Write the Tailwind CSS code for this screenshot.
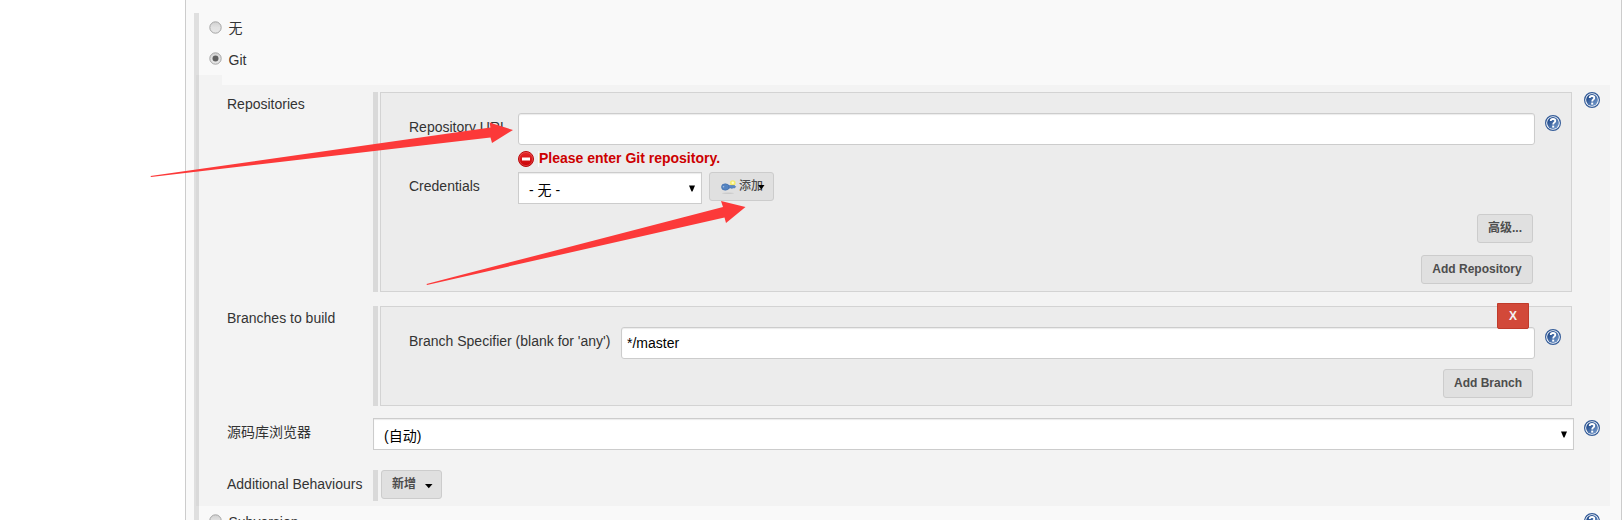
<!DOCTYPE html>
<html lang="zh-CN">
<head>
<meta charset="utf-8">
<title>Git</title>
<script src="https://cdn.jsdelivr.net/npm/@tailwindcss/browser@4"></script>
</head>
<body class="relative h-[520px] w-[1622px] overflow-hidden bg-white pl-[185px] font-['Liberation_Sans','Noto_Sans_CJK_SC',sans-serif] text-[14px] leading-5 text-[#333]">
<svg class="absolute h-0 w-0">
  <defs>
    <linearGradient id="hg" x1="0" y1="0" x2="1" y2="1"><stop offset=".2" stop-color="#234d8d"/><stop offset="1" stop-color="#7fa3d3"/></linearGradient>
    <linearGradient id="rg" x1="0" y1="0" x2="0" y2="1"><stop offset="0" stop-color="#d0d0d0"/><stop offset=".5" stop-color="#e2e2e2"/><stop offset="1" stop-color="#e6e6e6"/></linearGradient>
    <linearGradient id="eg" x1="0" y1="0" x2="0" y2="1"><stop offset="0" stop-color="#e8292c"/><stop offset="1" stop-color="#c80004"/></linearGradient>
  </defs>
  <symbol id="help" viewBox="0 0 16 16">
    <circle cx="8" cy="8" r="7.4" fill="#fff" stroke="#335b98" stroke-width="1.2"/>
    <circle cx="8" cy="8" r="5.9" fill="url(#hg)"/>
    <path d="M5.7 6.1C5.7 4.6 6.7 4 8 4s2.3.7 2.3 1.9C10.300 7.500 8.200 7.400 8.200 9.500" fill="none" stroke="#fff" stroke-width="1.8"/>
    <rect x="7.200" y="10.600" width="2" height="2" fill="#fff"/>
  </symbol>
  <symbol id="radio" viewBox="0 0 13 13">
    <circle cx="6.500" cy="6.500" r="5.700" fill="url(#rg)" stroke="#a5a5a5"/>
  </symbol>
</svg>
<main class="h-[520px] w-[1437px] border-x border-[#ccc] bg-[#f9f9f9] pt-[13px] pl-2">
  <div class="flex h-[507px]">
    <div class="flex w-[5px] shrink-0 bg-[#dfdfdf] pl-[2px]"><div class="mt-[62px] h-[431px] w-[3px] bg-[#d9d9d9]"></div></div>
    <div class="w-[1422px] shrink-0">
      <label class="flex h-[31px] pl-[9.500px]">
        <svg class="mt-[7.500px] h-[13px] w-[13px]"><use href="#radio"/></svg>
        <span class="mt-[5px] ml-[7px]">无</span>
      </label>
      <label class="flex h-[31px] pl-[9.500px]">
        <svg class="mt-[7.500px] h-[13px] w-[13px]"><use href="#radio"/><circle cx="6.500" cy="6.500" r="3" fill="#606060"/></svg>
        <span class="mt-[6px] ml-[7px]">Git</span>
      </label>
      <div class="h-[10px] w-[23px] bg-[#f3f3f3]"></div>
      <section class="h-[421px] w-[1411px] bg-[#f3f3f3] pt-[7px] pl-7">
        <!-- Repositories -->
        <div class="flex h-[214px]">
          <div class="w-[146px] pt-[2px]">Repositories</div>
          <div class="h-[200px] w-[5px] bg-[#d9d9d9]"></div>
          <div class="ml-[2px] h-[200px] w-[1192px] border border-[#d3d3d3] bg-[#ececec] pt-5 pl-7">
            <div class="flex h-[38px]">
              <div class="w-[109px] pt-1 whitespace-nowrap">Repository URL</div>
              <input class="h-8 w-[1017px] rounded-[3px] border border-[#ccc] bg-white inset-shadow-[0_1px_1px_rgba(0,0,0,0.08)]">
              <svg class="mt-[2px] ml-[10px] h-4 w-4"><use href="#help"/></svg>
            </div>
            <div class="flex h-[21px] pl-[109px] font-bold text-[#c00]">
              <svg class="h-4 w-4" viewBox="0 0 16 16"><circle cx="8" cy="8" r="7.500" fill="url(#eg)" stroke="#b90a0c"/><circle cx="8" cy="8" r="6.600" fill="none" stroke="#e86a6c" stroke-width=".5"/><rect x="4" y="6.500" width="8" height="3" fill="#fff"/></svg>
              <span class="ml-1 h-4 w-px bg-[#fafafa]"></span>
              <span class="-mt-[3px]">Please enter Git repository.</span>
            </div>
            <div class="flex h-[42px]">
              <div class="w-[109px] pt-1">Credentials</div>
              <div class="flex h-8 w-[184px] justify-between border border-[#ccc] bg-white pt-[7px] pr-[6px] pl-[10px] text-black inset-shadow-[0_1px_1px_rgba(0,0,0,0.08)]">
                <span>- 无 -</span>
                <svg class="mt-[5px] h-[7px] w-[6px]" viewBox="0 0 6 7"><path d="M0 .500h6L3.500 6.500h-1z"/></svg>
              </div>
              <div class="relative ml-[7px] flex h-[29px] w-[65px] rounded-[3px] border border-[#ccc] bg-[#e0e0e0] pl-[11px] text-[12px] font-bold text-[#4d4d4d]">
                <svg class="mt-[6px] h-4 w-4" viewBox="0 0 16 16"><ellipse cx="7" cy="14.200" rx="6" ry=".7" fill="#cbcbcb"/><circle cx="11.800" cy="4" r="2.800" fill="#f8ed55" opacity=".85"/><circle cx="11.800" cy="3.800" r="1.200" fill="#fffbc4"/><path d="M7 6.500h6.500l1.200 1.200-1.200 1.400-1.500-.4-1 .9-1.200-.7L7 9.500z" fill="#5a88c4" stroke="#3765a6" stroke-width=".5"/><ellipse cx="4.300" cy="8" rx="3.800" ry="3.200" fill="#5584c2" stroke="#3f6ba9" stroke-width=".6"/><circle cx="2.500" cy="7.800" r=".8" fill="#a9c1e0"/></svg>
                <span class="mt-[3px] ml-[2px] font-medium">添加</span>
                <svg class="absolute top-[12px] left-[47px] h-[5px] w-[8px]" viewBox="0 0 8 5"><path d="M1 0h6.500L4.300 4.500z"/></svg>
              </div>
            </div>
            <div class="flex flex-col items-end gap-3 pr-[38px] text-[12px] leading-[26px] font-bold text-[#4d4d4d]">
              <button class="h-[29px] w-[56px] rounded-[3px] border border-[#ccc] bg-[#e0e0e0] pb-px">高级...</button>
              <button class="h-[29px] w-[112px] rounded-[3px] border border-[#ccc] bg-[#e0e0e0] pb-px whitespace-nowrap">Add Repository</button>
            </div>
          </div>
          <svg class="ml-3 h-4 w-4"><use href="#help"/></svg>
        </div>
        <!-- Branches -->
        <div class="flex h-[112px]">
          <div class="w-[146px] pt-[2px]">Branches to build</div>
          <div class="h-[100px] w-[5px] bg-[#d9d9d9]"></div>
          <div class="relative ml-[2px] h-[100px] w-[1192px] border border-[#d3d3d3] bg-[#ececec] pt-5 pl-7">
            <div class="flex h-[42px]">
              <div class="w-[212px] pt-1 whitespace-nowrap">Branch Specifier (blank for 'any')</div>
              <input value="*/master" class="h-8 w-[914px] rounded-[3px] border border-[#ccc] bg-white px-[5px] text-black inset-shadow-[0_1px_1px_rgba(0,0,0,0.08)]">
              <svg class="mt-[2px] ml-[10px] h-4 w-4"><use href="#help"/></svg>
            </div>
            <div class="flex justify-end pr-[38px]">
              <button class="h-[29px] w-[90px] rounded-[3px] border border-[#ccc] bg-[#e0e0e0] pb-px text-[12px] leading-[26px] font-bold whitespace-nowrap text-[#4d4d4d]">Add Branch</button>
            </div>
            <button class="absolute -top-1 left-[1116px] h-[26px] w-8 rounded-b-[2px] border border-[#c03b2b] bg-[#d24939] text-[12px] leading-[24px] font-bold text-[#f2f2f2]">X</button>
          </div>
        </div>
        <!-- Repository browser -->
        <div class="flex h-[52px]">
          <div class="w-[146px] pt-1">源码库浏览器</div>
          <div class="flex h-8 w-[1201px] justify-between border border-[#ccc] bg-white pt-[7px] pr-[6px] pl-[10px] text-black inset-shadow-[0_1px_1px_rgba(0,0,0,0.08)]">
            <span>(自动)</span>
            <svg class="mt-[5px] h-[7px] w-[6px]" viewBox="0 0 6 7"><path d="M0 .500h6L3.500 6.500h-1z"/></svg>
          </div>
          <svg class="mt-[2px] ml-[10px] h-4 w-4"><use href="#help"/></svg>
        </div>
        <div class="flex h-[31px]">
          <div class="w-[146px] pt-1 whitespace-nowrap">Additional Behaviours</div>
          <div class="h-[31px] w-[5px] bg-[#d9d9d9]"></div>
          <div class="ml-[3px] flex h-[29px] w-[61px] rounded-[3px] border border-[#ccc] bg-[#e0e0e0] pt-[3px] pl-[10px] text-[12px] font-bold text-[#4d4d4d]">
            <span>新增</span>
            <svg class="mt-[10px] ml-[9px] h-[5px] w-[8px]" viewBox="0 0 8 5"><path d="M0 0h7.500L3.800 4.200z" fill="#000"/></svg>
          </div>
        </div>
      </section>
      <div class="flex h-[14px] overflow-hidden pl-[9.500px]">
        <svg class="mt-[7.500px] h-[13px] w-[13px] shrink-0"><use href="#radio"/></svg>
        <span class="mt-[6px] ml-[7px]">Subversion</span>
        <svg class="mt-[7px] mr-[21px] ml-auto h-4 w-4"><use href="#help"/></svg>
      </div>
    </div>
  </div>
</main>
<svg class="pointer-events-none absolute top-0 left-0 h-[520px] w-[1622px]" viewBox="0 0 1622 520" fill="#fc3939">
  <path d="M150.500 176L490.500 127.500 489.500 122.500 513 130 492 143 490.500 137.500 151 177Z"/>
  <path d="M426.500 284L723 207 721 201 745.500 207 726 223 724.500 217.500 427 285Z"/>
</svg>
</body>
</html>
